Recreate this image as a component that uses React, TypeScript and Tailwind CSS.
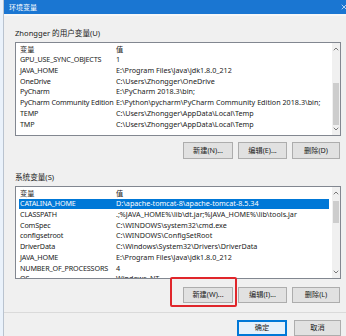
import { ChevronDown, ChevronUp, X } from 'lucide-react'

const userVars: [string, string][] = [
  ['GPU_USE_SYNC_OBJECTS', '1'],
  ['JAVA_HOME', 'E:\\Program Files\\Java\\jdk1.8.0_212'],
  ['OneDrive', 'C:\\Users\\Zhongger\\OneDrive'],
  ['PyCharm', 'E:\\PyCharm 2018.3\\bin;'],
  ['PyCharm Community Edition', 'E:\\Python\\pycharm\\PyCharm Community Edition 2018.3\\bin;'],
  ['TEMP', 'C:\\Users\\Zhongger\\AppData\\Local\\Temp'],
  ['TMP', 'C:\\Users\\Zhongger\\AppData\\Local\\Temp'],
]

const sysVars: [string, string][] = [
  ['CATALINA_HOME', 'D:\\apache-tomcat-8\\apache-tomcat-8.5.34'],
  ['CLASSPATH', '.;%JAVA_HOME%\\lib\\dt.jar;%JAVA_HOME%\\lib\\tools.jar'],
  ['ComSpec', 'C:\\WINDOWS\\system32\\cmd.exe'],
  ['configsetroot', 'C:\\WINDOWS\\ConfigSetRoot'],
  ['DriverData', 'C:\\Windows\\System32\\Drivers\\DriverData'],
  ['JAVA_HOME', 'E:\\Program Files\\Java\\jdk1.8.0_212'],
  ['NUMBER_OF_PROCESSORS', '4'],
  ['OS', 'Windows_NT'],
]

function Row({ name, value, selected }: { name: string; value: string; selected?: boolean }) {
  return (
    <div
      className={`flex h-[10.7px] items-center whitespace-nowrap ${
        selected ? 'bg-[#0078d7] text-white' : 'text-[#1a1a1a]'
      }`}
    >
      <span className="w-[97px] shrink-0 pl-[1px] tracking-[-0.15px]">{name}</span>
      <span>{value}</span>
    </div>
  )
}

function VarList({ rows, selectedIndex, thumbTop, thumbHeight }: {
  rows: [string, string][]
  selectedIndex?: number
  thumbTop: number
  thumbHeight: number
}) {
  return (
    <div className="flex h-full w-full border border-[#828790] bg-white text-[7.2px]">
      <div className="min-w-0 flex-1 overflow-hidden pl-[3px] pr-[3px] pt-[1px]">
        <div className="flex h-[10.7px] items-center text-[#1a1a1a]">
          <span className="w-[97px] shrink-0 pl-[1px]">变量</span>
          <span>值</span>
        </div>
        {rows.map(([n, v], i) => (
          <Row key={n + i} name={n} value={v} selected={i === selectedIndex} />
        ))}
      </div>
      <div className="relative w-[8px] shrink-0 bg-[#f0f0f0]">
        <ChevronUp className="absolute left-0 top-[2px] text-[#606060]" size={8} strokeWidth={2.5} />
        <div
          className="absolute left-[1px] w-[6px] bg-[#cdcdcd]"
          style={{ top: thumbTop, height: thumbHeight }}
        />
        <ChevronDown className="absolute bottom-[2px] left-0 text-[#606060]" size={8} strokeWidth={2.5} />
      </div>
    </div>
  )
}

function Btn({ label, w, primary }: { label: string; w: number; primary?: boolean }) {
  return (
    <div
      className={`flex h-full shrink-0 items-center justify-center text-[7.2px] text-[#1a1a1a] ${
        primary ? 'border-2 border-[#0078d7] bg-[#e5f1fb]' : 'border border-[#adadad] bg-[#e1e1e1]'
      }`}
      style={{ width: w }}
    >
      {label}
    </div>
  )
}

export default function App() {
  return (
    <div
      className="relative flex h-[336px] w-[346px] overflow-hidden bg-[#eaf2fb] text-[7.6px] leading-none"
      style={{ fontFamily: '"Noto Sans", "Noto Sans CJK SC", sans-serif' }}
    >
      <div className="w-[3px] shrink-0" />
      <div className="flex min-w-0 flex-1 flex-col border-l border-[#b9c3cf] bg-[#f0f0f0]">
        <div className="flex h-[14px] shrink-0 items-center justify-between bg-[#1a76d2] pl-[5px] text-white">
          <span className="text-[7px]">环境变量</span>
          <X size={8} className="mr-[-2px]" />
        </div>
        <div className="h-[2px] shrink-0 bg-[#f7f7f7]" />

        <div className="flex min-w-0 flex-col pl-[11px] pr-[5px]">
          <div className="mt-[12px] h-[10px] leading-[10px] text-[#1a1a1a]">Zhongger 的用户变量(U)</div>
          <div className="mt-[4px] h-[94px]">
            <VarList rows={userVars} thumbTop={40} thumbHeight={42} />
          </div>
          <div className="mt-[6px] flex h-[17px] justify-end gap-[5px] pr-[1px]">
            <Btn label="新建(N)..." w={50} />
            <Btn label="编辑(E)..." w={49} />
            <Btn label="删除(D)" w={48} />
          </div>

          <div className="mt-[13px] h-[10px] leading-[10px] text-[#1a1a1a]">系统变量(S)</div>
          <div className="mt-[4px] h-[93px]">
            <VarList rows={sysVars} selectedIndex={0} thumbTop={14} thumbHeight={22} />
          </div>
          <div className="mt-[8px] flex h-[16px] justify-end gap-[5px] pr-[1px]">
            <Btn label="新建(W)..." w={50} />
            <Btn label="编辑(I)..." w={49} />
            <Btn label="删除(L)" w={48} />
          </div>
        </div>

        <div className="mt-[9px] h-px shrink-0 bg-[#dadada]" />
        <div className="mt-[7px] flex h-[18px] justify-end gap-[7px] pr-[5px]">
          <Btn label="确定" w={50} primary />
          <Btn label="取消" w={47} />
        </div>
      </div>

      <div className="absolute left-[170px] top-[277px] h-[30px] w-[67px] rounded-[2px] border-2 border-[#e0262b]" />
    </div>
  )
}
